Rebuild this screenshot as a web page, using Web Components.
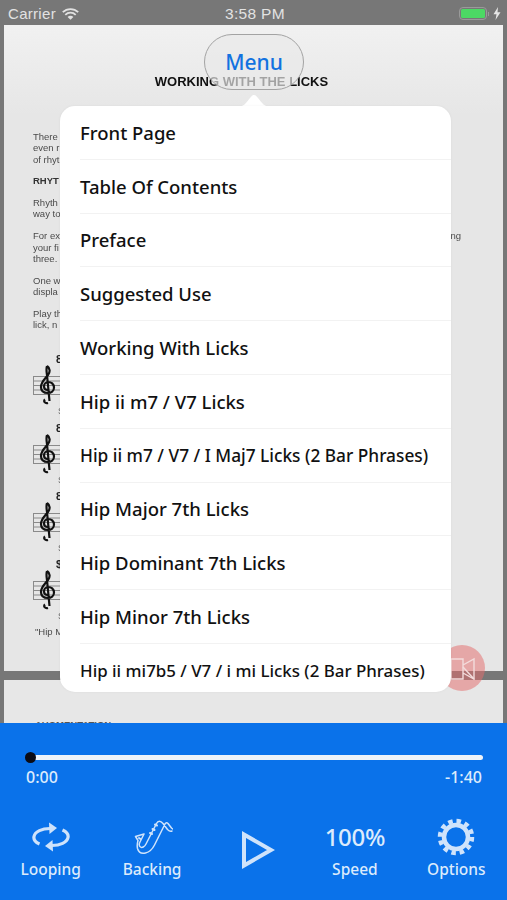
<!DOCTYPE html>
<html>
<head>
<meta charset="utf-8">
<title>Licks</title>
<style>
html,body{margin:0;padding:0;background:#777;}
body{width:507px;height:900px;overflow:hidden;font-family:"Noto Sans",sans-serif;}
</style>
</head>
<body>
<licks-app>
  <status-bar></status-bar>
  <score-view></score-view>
  <player-panel></player-panel>
</licks-app>

<template id="status-tpl">
<style>
:host{display:flex;align-items:center;justify-content:space-between;height:25px;padding:2px 0 0 8px;box-sizing:border-box;background:#777;color:#e2e2e2;font:15px "Liberation Sans",sans-serif;letter-spacing:.3px;position:relative;}
.left{display:flex;align-items:center;gap:6px;width:150px;}
.time{width:100px;text-align:center;margin-left:-5px;white-space:nowrap;font-size:15.5px;}
.right{display:flex;align-items:center;gap:4px;width:150px;justify-content:flex-end;padding-right:6px;box-sizing:border-box;}
.batt{width:28px;height:13px;border:1.5px solid #9a9a9a;border-radius:4px;box-sizing:border-box;padding:1px;}
.batt i{display:block;height:100%;background:#4cd964;border-radius:1.5px;}
.nub{width:1.5px;height:4px;background:#9a9a9a;margin-left:-3px;}
</style>
<div class="left"><span>Carrier</span>
<svg width="17" height="12" viewBox="0 0 17 12"><path d="M.8 4.2a11 11 0 0 1 15.4 0M3.3 6.8a7.4 7.4 0 0 1 10.4 0" fill="none" stroke="#e2e2e2" stroke-width="1.8"/><path d="M5.6 9a4 4 0 0 1 5.8 0L8.500 11.800z" fill="#e2e2e2"/></svg>
</div>
<div class="time">3:58 PM</div>
<div class="right"><div class="batt"><i></i></div><div class="nub"></div>
<svg width="8" height="13" viewBox="0 0 8 13"><path d="M5 0L.5 7.200h3L2.500 13 7.500 5.300h-3z" fill="#e6e6e6"/></svg>
</div>
</template>

<template id="view-tpl">
<style>
:host{display:block;height:698px;position:relative;background:#777;overflow:hidden;}
.page{margin:0 4px;background:#e7e7e7;overflow:hidden;box-sizing:border-box;}
.p1{height:646px;background:linear-gradient(180deg,#f1f1f1 0,#e6e6e6 90px);font:9.500px/11.300px "Liberation Sans",sans-serif;color:#4a4a4a;padding:49px 0 0 29px;filter:blur(.35px);}
.p2{height:43px;margin-top:9px;padding:39px 0 0 31px;font:bold 9.500px/11px "Liberation Sans",sans-serif;color:#555;}
h1{margin:0 0 42px -29px;font:bold 13px/15px "Liberation Sans",sans-serif;color:#111;text-align:center;padding-right:24px;}
p{margin:0 0 10.500px;width:428px;}
.b{font-weight:bold;color:#333;}
.l{display:flex;justify-content:space-between;}
.foot{margin:-1px 0 0 2px;}
.pill{position:absolute;left:204px;top:9px;width:100px;height:56px;box-sizing:border-box;border:1.5px solid #a3a3a3;border-radius:28px;background:rgba(233,233,233,.68);display:flex;align-items:center;justify-content:center;color:#1272e0;font:500 21px "Noto Sans",sans-serif;}
.rec{position:absolute;left:439px;top:620px;width:46px;height:46px;border-radius:50%;background:rgba(228,110,110,.52);}
.rec svg{position:absolute;left:11px;top:11px;}
.arrow{position:absolute;left:236px;top:65px;}
.pop{position:absolute;left:60px;top:81px;width:391px;height:586px;background:#fff;border-radius:15px;overflow:hidden;box-shadow:0 0 3px rgba(0,0,0,.05);}
</style>
<div class="page p1">
  <h1>WORKING WITH THE LICKS</h1>
  <p>There<br>even r<br>of rhyt</p>
  <p class="b">RHYT</p>
  <p>Rhyth<br>way to</p>
  <p><span class="l"><span>For ex</span><span>ng</span></span>your fi<br>three.</p>
  <p>One w<br>displa</p>
  <p>Play th<br>lick, n</p>
  <score-line chord="8" style="margin-top:23px"></score-line>
  <score-line chord="8"></score-line>
  <score-line chord="8"></score-line>
  <score-line chord="$"></score-line>
  <div class="foot">"Hip M</div>
</div>
<div class="page p2">AUGMENTATION</div>
<div class="pill">Menu</div>
<div class="rec"><svg width="26" height="26" viewBox="0 0 26 26" fill="none" stroke="#f3dcdc" stroke-width="1.4"><path d="M1 3h12v20H1zM13 9l11-6v20l-11-6"/><path d="M13 11l11 12"/></svg></div>
<svg class="arrow" width="36" height="17" viewBox="0 0 36 17"><path d="M0 17C8 17 10 13 14 8 16 5.500 17 5 18 5s2 .5 4 3c4 5 6 9 14 9z" fill="#fff"/></svg>
<div class="pop">
  <menu-item>Front Page</menu-item>
  <menu-item>Table Of Contents</menu-item>
  <menu-item>Preface</menu-item>
  <menu-item>Suggested Use</menu-item>
  <menu-item>Working With Licks</menu-item>
  <menu-item>Hip ii m7 / V7 Licks</menu-item>
  <menu-item small>Hip ii m7 / V7 / I Maj7 Licks (2 Bar Phrases)</menu-item>
  <menu-item>Hip Major 7th Licks</menu-item>
  <menu-item>Hip Dominant 7th Licks</menu-item>
  <menu-item>Hip Minor 7th Licks</menu-item>
  <menu-item smaller>Hip ii mi7b5 / V7 / i mi Licks (2 Bar Phrases)</menu-item>
</div>
</template>

<template id="score-tpl">
<style>
:host{display:block;height:68.300px;position:relative;font:bold 11px/12px "Liberation Sans",sans-serif;color:#222;}
.row{display:flex;flex-direction:column;}
.chord{padding-left:23px;height:12px;}
svg{display:block;}
.s{padding-left:25px;font:9px/11px "Liberation Sans",sans-serif;color:#666;margin-top:1px;}
</style>
<div class="row">
<div class="chord"></div>
<svg width="30" height="40" viewBox="0 0 30 40">
  <g stroke="#8a8a8a" stroke-width="1"><path d="M0 11.500h30M0 16h30M0 20.500h30M0 25h30M0 29.500h30M.5 11v19"/></g>
  <path d="M15 38c-3 1-5-2-3-3.500M14 1c3 2 3.500 6 1 9-3 4-7 7-7 12 0 4 3 6 7 6 3 0 6-2 6-5.500S18 17 15.500 17 11 19 11 21.500s2 3.500 3.500 3.500M14 1c-1 3-.5 5 0 9l2.500 26" fill="none" stroke="#111" stroke-width="2.200"/>
</svg>
<div class="s">S</div>
</div>
</template>

<template id="item-tpl">
<style>
:host{display:flex;align-items:center;height:53.800px;margin-left:20px;box-sizing:border-box;border-bottom:1.5px solid #f2f2f2;color:#111;font:500 18.500px "Noto Sans",sans-serif;white-space:nowrap;}
:host([small]){font-size:17.300px;}
:host([smaller]){font-size:16.900px;}
:host(:last-child){border-bottom:0;}
</style>
<slot></slot>
</template>

<template id="player-tpl">
<style>
:host{display:block;height:177px;background:#0a72ea;color:#dcebfc;font-family:"Noto Sans",sans-serif;position:relative;}
.seek{padding:32px 24px 0 30px;}
.track{height:5px;border-radius:3px;background:#eef3f9;position:relative;}
.thumb{position:absolute;left:-5px;top:-3px;width:11px;height:11px;border-radius:50%;background:#0b0b14;}
.times{display:flex;justify-content:space-between;padding:6px 25px 0 26px;font:500 16px/22px "Noto Sans",sans-serif;}
.btns{display:grid;grid-template-columns:repeat(5,1fr);margin-top:29px;}
.play{display:flex;justify-content:center;padding:14px 0 0 10px;}
</style>
<div class="seek"><div class="track"><div class="thumb"></div></div></div>
<div class="times"><span>0:00</span><span>-1:40</span></div>
<div class="btns">
  <panel-button label="Looping">
    <svg width="38" height="32" viewBox="0 0 38 32" fill="none" stroke="#cfe3fb" stroke-width="3.200">
      <path d="M7.500 23C3 21 1.500 18 2 15.500 3 10.500 10 7.500 18 7.500"/><path d="M17 1.500l8 5.500-7.500 6z" fill="#cfe3fb" stroke="none"/>
      <path d="M30.500 9C35 11 36.500 14 36 16.500 35 21.500 28 24.500 20 24.500"/><path d="M21 30.500l-8-5.500 7.500-6z" fill="#cfe3fb" stroke="none"/>
    </svg>
  </panel-button>
  <panel-button label="Backing">
    <svg width="42" height="40" viewBox="5 6 42 40" fill="none" stroke="#cfe3fb" stroke-width="1.500" stroke-linejoin="round" stroke-linecap="round">
      <path d="M46 20c-2 1-3 0-4.500-1.500L37 12.500c-2.500-3-5-3-6.500 0L20 33c-1.500 3-4 4-5.500 3-1.500-1-1.500-3-.5-5l4-8-8.500 2.500 2.500 4c-.8 3-1 6-.5 8 1 3.500 4 5.500 8 4.500 4-1 7-4 9-8l10.500-21c1-1.500 2-1.500 3-.5l3.500 4.500c1.500 1.500 3 1.500 4 .5"/>
      <path d="M24 22l2 1M26.500 18l2 1M29 13.500l2 1M13 27l1.500 1" stroke-width="2"/>
    </svg>
  </panel-button>
  <div class="play"><svg width="34" height="38" viewBox="0 0 34 38"><path d="M3 3.500L30 19 3 34.500z" fill="none" stroke="#cfe3fb" stroke-width="4"/></svg></div>
  <panel-button label="Speed" big="100%"></panel-button>
  <panel-button label="Options">
    <svg width="38" height="38" viewBox="0 0 38 38" fill="none" stroke="#cfe3fb">
      <circle cx="19" cy="19" r="12" stroke-width="4.500"/>
      <circle cx="19" cy="19" r="16" stroke-width="4.500" stroke-dasharray="4.500 3.880"/>
    </svg>
  </panel-button>
</div>
</template>

<template id="button-tpl">
<style>
:host{display:flex;flex-direction:column;align-items:center;}
.icon{height:40px;display:flex;align-items:center;justify-content:center;}
.big{font:500 24px/40px "Noto Sans",sans-serif;letter-spacing:-.3px;}
.label{font:500 15.500px/22px "Noto Sans",sans-serif;margin-top:1px;color:#dcebfc;white-space:nowrap;}
</style>
<div class="icon"><slot></slot><span class="big"></span></div>
<div class="label"></div>
</template>

<script>
function stamp(el, id){
  el.attachShadow({mode:'open'});
  el.shadowRoot.appendChild(document.getElementById(id).content.cloneNode(true));
}

class LicksApp extends HTMLElement{
  constructor(){
    super();
    this.attachShadow({mode:'open'});
    this.shadowRoot.innerHTML = '<style>:host{display:block;width:507px;height:900px;}</style><slot></slot>';
  }
}
class StatusBar extends HTMLElement{ constructor(){ super(); stamp(this,'status-tpl'); } }
class ScoreView extends HTMLElement{ constructor(){ super(); stamp(this,'view-tpl'); } }
class MenuItem extends HTMLElement{ constructor(){ super(); stamp(this,'item-tpl'); } }
class PlayerPanel extends HTMLElement{ constructor(){ super(); stamp(this,'player-tpl'); } }

class ScoreLine extends HTMLElement{
  constructor(){ super(); stamp(this,'score-tpl'); }
  connectedCallback(){
    this.shadowRoot.querySelector('.chord').textContent = this.getAttribute('chord') || '';
  }
}
class PanelButton extends HTMLElement{
  constructor(){ super(); stamp(this,'button-tpl'); }
  connectedCallback(){
    this.shadowRoot.querySelector('.label').textContent = this.getAttribute('label') || '';
    this.shadowRoot.querySelector('.big').textContent = this.getAttribute('big') || '';
  }
}

customElements.define('licks-app', LicksApp);
customElements.define('status-bar', StatusBar);
customElements.define('score-view', ScoreView);
customElements.define('menu-item', MenuItem);
customElements.define('player-panel', PlayerPanel);
customElements.define('score-line', ScoreLine);
customElements.define('panel-button', PanelButton);
</script>
</body>
</html>
